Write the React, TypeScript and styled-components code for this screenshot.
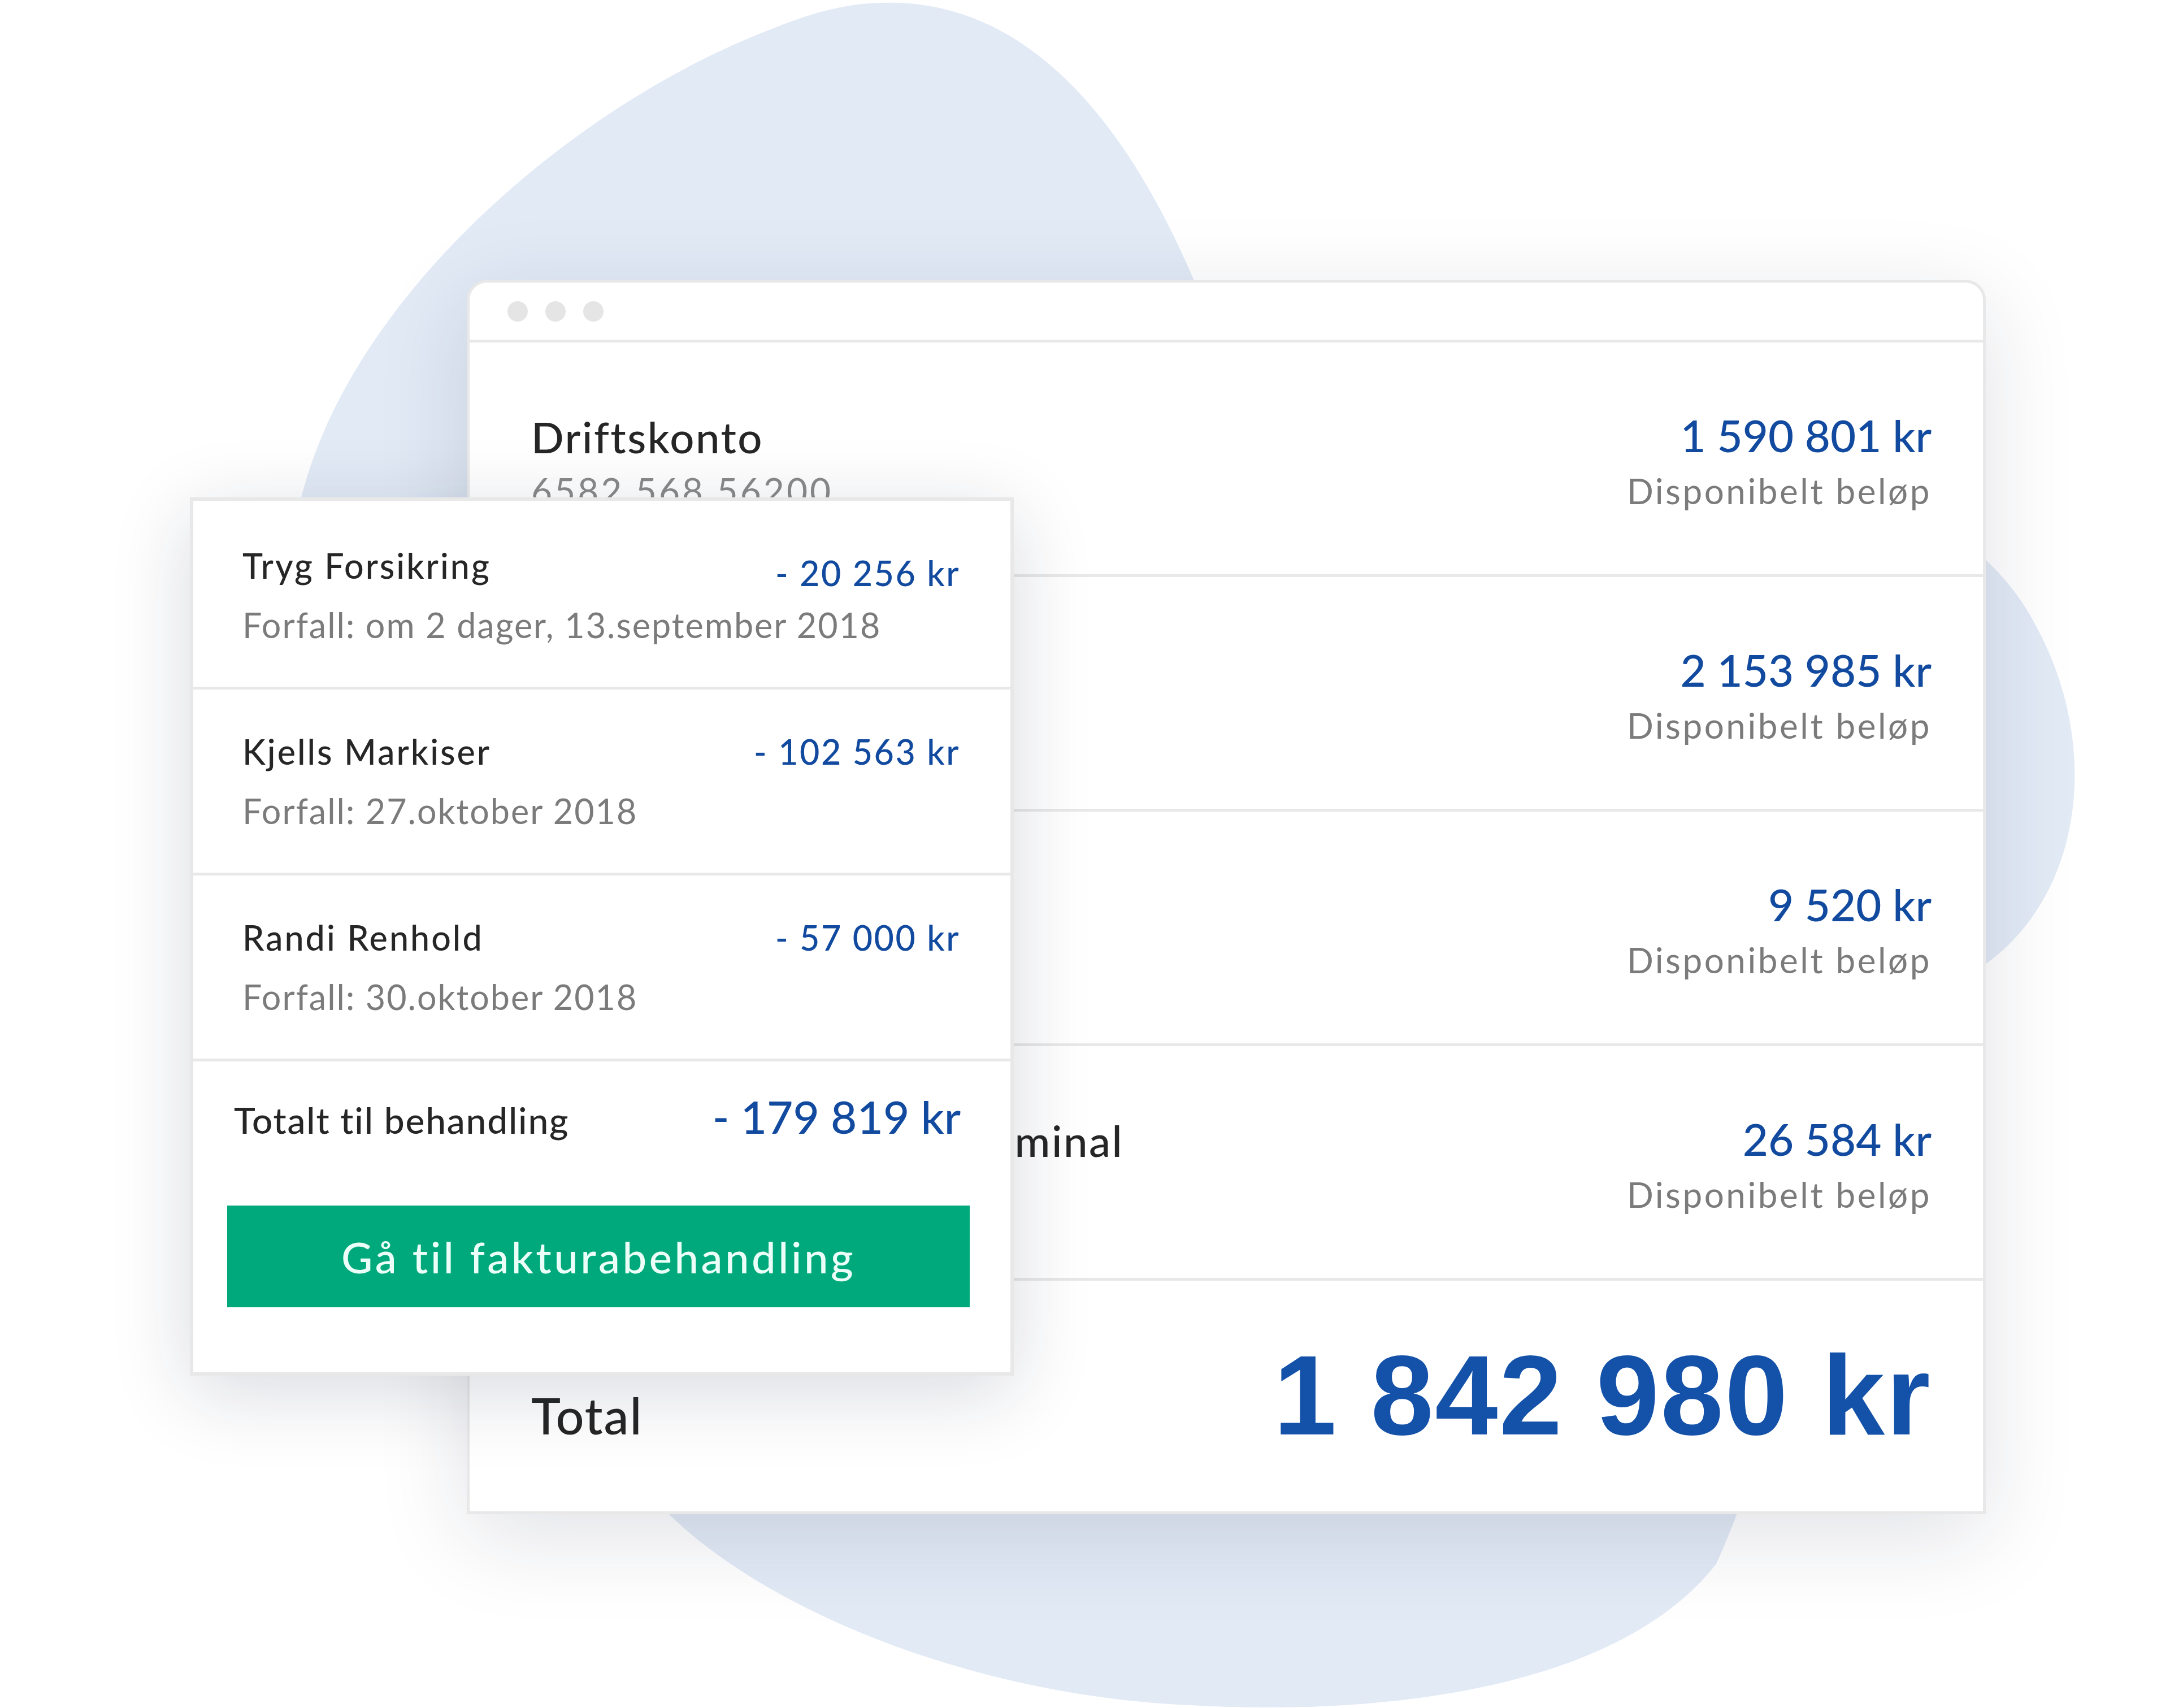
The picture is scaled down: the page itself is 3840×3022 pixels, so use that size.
import React from "react";
import styled, { createGlobalStyle } from "styled-components";

const GlobalStyle = createGlobalStyle`
  * {
    box-sizing: border-box;
  }
  body {
    margin: 0;
    background: #ffffff;
    font-family: Lato, "Open Sans", sans-serif;
  }
`;

const BLUE = "#114a9f";
const INK = "#262626";
const MUTED = "#7b7b7b";
const LINE = "#e8e8e8";

const Page = styled.div`
  position: relative;
  width: 3840px;
  height: 3022px;
  overflow: hidden;
  padding: 495px 0 0 826px;
  background: #ffffff;
`;

const Backdrop = styled.svg`
  position: absolute;
  top: 0;
  left: 0;
  width: 3840px;
  height: 3022px;
  z-index: 0;
`;

const Window = styled.section`
  position: relative;
  z-index: 1;
  width: 2688px;
  height: 2184px;
  background: #ffffff;
  border: 5px solid ${LINE};
  border-radius: 36px 36px 0 0;
  box-shadow: 0 40px 160px rgba(20, 30, 60, 0.13);
  display: flex;
  flex-direction: column;
`;

const TitleBar = styled.div`
  height: 106px;
  border-bottom: 5px solid ${LINE};
  display: flex;
  align-items: center;
  gap: 31px;
  padding-left: 67px;
`;

const Dot = styled.span`
  width: 36px;
  height: 36px;
  border-radius: 50%;
  background: #e5e5e5;
`;

const AccountRow = styled.div`
  height: 415px;
  border-bottom: 5px solid ${LINE};
  display: flex;
  justify-content: space-between;
  align-items: flex-start;
  padding: 119px 91px 0 109px;
`;

const AccountInfo = styled.div`
  display: flex;
  flex-direction: column;
`;

const AccountName = styled.div`
  font-size: 76px;
  line-height: 96px;
  font-weight: 500;
  letter-spacing: 2.5px;
  color: ${INK};
  white-space: nowrap;
`;

const AccountNumber = styled.div`
  margin-top: 6px;
  font-size: 64px;
  line-height: 82px;
  letter-spacing: 4px;
  color: #8a8a8a;
`;

const Balance = styled.div`
  display: flex;
  flex-direction: column;
  align-items: flex-end;
`;

const Amount = styled.div`
  font-size: 78px;
  line-height: 90px;
  font-weight: 500;
  color: ${BLUE};
  white-space: nowrap;
`;

const AmountLabel = styled.div`
  margin-top: 12px;
  font-size: 62px;
  line-height: 82px;
  letter-spacing: 3.5px;
  color: ${MUTED};
`;

const TotalRow = styled.div`
  flex: 1;
  display: flex;
  justify-content: space-between;
  align-items: baseline;
  padding: 103px 91px 0 109px;
`;

const TotalLabel = styled.div`
  font-size: 88px;
  font-weight: 500;
  letter-spacing: 2px;
  color: ${INK};
`;

const TotalAmount = styled.div`
  font-family: "Liberation Sans", Arial, sans-serif;
  font-size: 200px;
  line-height: 200px;
  font-weight: 700;
  letter-spacing: 2.5px;
  color: #1452aa;
  white-space: nowrap;
`;

const InvoiceCard = styled.aside`
  position: absolute;
  z-index: 2;
  left: 336px;
  top: 880px;
  width: 1458px;
  height: 1554px;
  background: #ffffff;
  border: 6px solid ${LINE};
  box-shadow: 0 30px 130px rgba(20, 30, 60, 0.16);
  padding-top: 5px;
  display: flex;
  flex-direction: column;
`;

const InvoiceRow = styled.div`
  height: 329px;
  border-bottom: 5px solid ${LINE};
  display: flex;
  flex-direction: column;
  justify-content: center;
  padding: 0 89px 0 87px;
`;

const InvoiceHead = styled.div`
  display: flex;
  justify-content: space-between;
  align-items: baseline;
`;

const Payee = styled.div`
  font-size: 61px;
  line-height: 80px;
  font-weight: 500;
  letter-spacing: 3px;
  color: ${INK};
`;

const InvoiceAmount = styled.div<{ $drop?: number }>`
  font-size: 61px;
  line-height: 80px;
  font-weight: 500;
  letter-spacing: 2.5px;
  color: ${BLUE};
  white-space: nowrap;
  transform: translateY(${(p) => p.$drop ?? 0}px);
`;

const DueDate = styled.div`
  margin-top: 25px;
  font-size: 61px;
  line-height: 80px;
  letter-spacing: 2px;
  color: ${MUTED};
  white-space: nowrap;
`;

const Summary = styled.div`
  flex: 1;
  padding: 49px 72px 0 60px;
  display: flex;
  flex-direction: column;
`;

const SummaryLine = styled.div`
  display: flex;
  justify-content: space-between;
  align-items: baseline;
  padding: 0 16px 0 12px;
`;

const SummaryLabel = styled.div`
  font-size: 64px;
  font-weight: 500;
  letter-spacing: 1.8px;
  color: ${INK};
`;

const SummaryAmount = styled.div`
  font-size: 80px;
  line-height: 96px;
  font-weight: 500;
  color: ${BLUE};
  white-space: nowrap;
`;

const ActionButton = styled.button`
  margin-top: 110px;
  height: 180px;
  width: 100%;
  border: none;
  background: #00a97b;
  color: #ebfff8;
  font-family: Lato, "Open Sans", sans-serif;
  font-size: 76px;
  font-weight: 500;
  letter-spacing: 4.5px;
  display: flex;
  align-items: center;
  justify-content: center;
  cursor: pointer;
`;

type Account = { name?: string; number?: string; amount: string };

// rows 2 and 3 have their names hidden behind the invoice card, row 4 only shows its tail
const accounts: Account[] = [
  { name: "Driftskonto", number: "6582 568 56200", amount: "1 590 801 kr" },
  { amount: "2 153 985 kr" },
  { amount: "9 520 kr" },
  { name: "Oppgjørskonto - kortterminal", amount: "26 584 kr" },
];

const invoices = [
  { payee: "Tryg Forsikring", due: "Forfall: om 2 dager, 13.september 2018", amount: "- 20 256 kr", drop: 13 },
  { payee: "Kjells Markiser", due: "Forfall: 27.oktober 2018", amount: "- 102 563 kr", drop: 0 },
  { payee: "Randi Renhold", due: "Forfall: 30.oktober 2018", amount: "- 57 000 kr", drop: 0 },
];

function App() {
  return (
    <>
      <GlobalStyle />
      <Page>
        <Backdrop viewBox="0 0 1568 1234" preserveAspectRatio="none">
          <path
            fill="#e2eaf6"
            d="M640 2 C760 0 830 120 870 220 C1000 300 1380 280 1470 450 C1520 540 1505 650 1430 700 C1330 760 1300 1000 1240 1130 C1170 1220 1000 1240 860 1232 C700 1225 540 1160 470 1080 C380 980 220 700 210 420 C210 250 400 80 560 20 C590 8 615 2 640 2 Z"
          />
        </Backdrop>

        <Window>
          <TitleBar>
            <Dot />
            <Dot />
            <Dot />
          </TitleBar>
          {accounts.map((a) => (
            <AccountRow key={a.amount}>
              <AccountInfo>
                {a.name && <AccountName>{a.name}</AccountName>}
                {a.number && <AccountNumber>{a.number}</AccountNumber>}
              </AccountInfo>
              <Balance>
                <Amount>{a.amount}</Amount>
                <AmountLabel>Disponibelt beløp</AmountLabel>
              </Balance>
            </AccountRow>
          ))}
          <TotalRow>
            <TotalLabel>Total</TotalLabel>
            <TotalAmount>1 842 980 kr</TotalAmount>
          </TotalRow>
        </Window>

        <InvoiceCard>
          {invoices.map((inv) => (
            <InvoiceRow key={inv.payee}>
              <InvoiceHead>
                <Payee>{inv.payee}</Payee>
                <InvoiceAmount $drop={inv.drop}>{inv.amount}</InvoiceAmount>
              </InvoiceHead>
              <DueDate>{inv.due}</DueDate>
            </InvoiceRow>
          ))}
          <Summary>
            <SummaryLine>
              <SummaryLabel>Totalt til behandling</SummaryLabel>
              <SummaryAmount>- 179 819 kr</SummaryAmount>
            </SummaryLine>
            <ActionButton>Gå til fakturabehandling</ActionButton>
          </Summary>
        </InvoiceCard>
      </Page>
    </>
  );
}

export default App;
